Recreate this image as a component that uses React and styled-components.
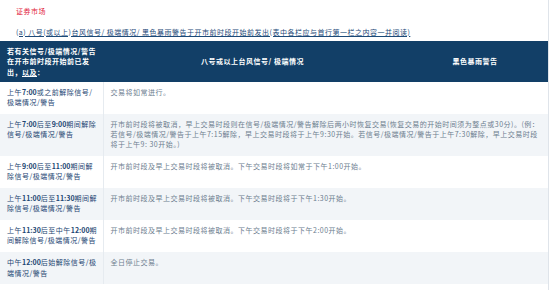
import React from "react";
import styled, { createGlobalStyle } from "styled-components";

const Global = createGlobalStyle`
  html, body { margin: 0; padding: 0; background: #fff; }
  body { font-family: "Noto Sans CJK SC", "Noto Sans", sans-serif; }
`;

const Page = styled.div`
  width: 549px;
  border-right: 1px solid #dfe4ea;
  min-height: 290px;
  box-sizing: border-box;
  letter-spacing: 0.5px;
`;

const Title = styled.div`
  padding: 6px 16px 0;
  font-size: 7px;
  line-height: 10.5px;
  color: #e2213a;
`;

const Sub = styled.a`
  display: block;
  margin: 10px 16px 4px;
  font-size: 7px;
  line-height: 10.5px;
  color: #1c4a78;
  text-decoration: underline;
`;

const Table = styled.table`
  width: 548px;
  border-collapse: collapse;
  table-layout: fixed;
  font-size: 7px;
  line-height: 10.3px;
`;

const HeadCell = styled.th`
  background: #123f67;
  color: #fff;
  font-weight: 700;
  line-height: 10.5px;
  padding: 4.5px 7px;
  text-align: ${(p) => (p.$center ? "center" : "left")};
  vertical-align: middle;
`;

const U = styled.span`
  text-decoration: underline;
`;

const Row = styled.tr`
  background: ${(p) => (p.$alt ? "#f2f5f8" : "#fff")};
`;

const KeyCell = styled.td`
  color: #1d4672;
  padding: 5px 4px 6.5px 7px;
  vertical-align: top;
  border-right: 1px solid #e6ebf0;
  b { font-weight: 700; letter-spacing: 0; }
`;

const ValCell = styled.td`
  color: #6d7e8f;
  padding: 5px 4px 6.5px 7px;
  vertical-align: top;
`;

const rows = [
  [<>上午<b>7:00</b>或之前解除信号/极端情况/警告</>, "交易将如常进行。"],
  [
    <>上午<b>7:00</b>后至<b>9:00</b>期间解除信号/极端情况/警告</>,
    "开市前时段将被取消，早上交易时段则在信号/极端情况/警告解除后两小时恢复交易(恢复交易的开始时间须为整点或30分)。(例：若信号/极端情况/警告于上午7:15解除，早上交易时段将于上午9:30开始。若信号/极端情况/警告于上午7:30解除，早上交易时段将于上午9: 30开始。)",
  ],
  [
    <>上午<b>9:00</b>后至<b>11:00</b>期间解除信号/极端情况/警告</>,
    "开市前时段及早上交易时段将被取消。下午交易时段将如常于下午1:00开始。",
  ],
  [
    <>上午<b>11:00</b>后至<b>11:30</b>期间解除信号/极端情况/警告</>,
    "开市前时段及早上交易时段将被取消。下午交易时段将于下午1:30开始。",
  ],
  [
    <>上午<b>11:30</b>后至中午<b>12:00</b>期间解除信号/极端情况/警告</>,
    "开市前时段及早上交易时段将被取消。下午交易时段将于下午2:00开始。",
  ],
  [<>中午<b>12:00</b>后始解除信号/极端情况/警告</>, "全日停止交易。"],
];

export default function App() {
  return (
    <Page>
      <Global />
      <Title>证券市场</Title>
      <Sub>(a) 八号(或以上)台风信号/ 极端情况/ 黑色暴雨警告于开市前时段开始前发出(表中各栏应与首行第一栏之内容一并阅读)</Sub>
      <Table>
        <colgroup>
          <col style={{ width: 103 }} />
          <col style={{ width: 299 }} />
          <col style={{ width: 146 }} />
        </colgroup>
        <thead>
          <tr>
            <HeadCell>
              若有关信号/极端情况/警告在开市前时段开始前已发
              <br />
              出，<U>以及</U>：
            </HeadCell>
            <HeadCell $center>八号或以上台风信号/ 极端情况</HeadCell>
            <HeadCell $center>黑色暴雨警告</HeadCell>
          </tr>
        </thead>
        <tbody>
          {rows.map(([k, v], i) => (
            <Row key={i} $alt={i % 2 === 1}>
              <KeyCell>{k}</KeyCell>
              <ValCell colSpan={2}>{v}</ValCell>
            </Row>
          ))}
        </tbody>
      </Table>
    </Page>
  );
}
